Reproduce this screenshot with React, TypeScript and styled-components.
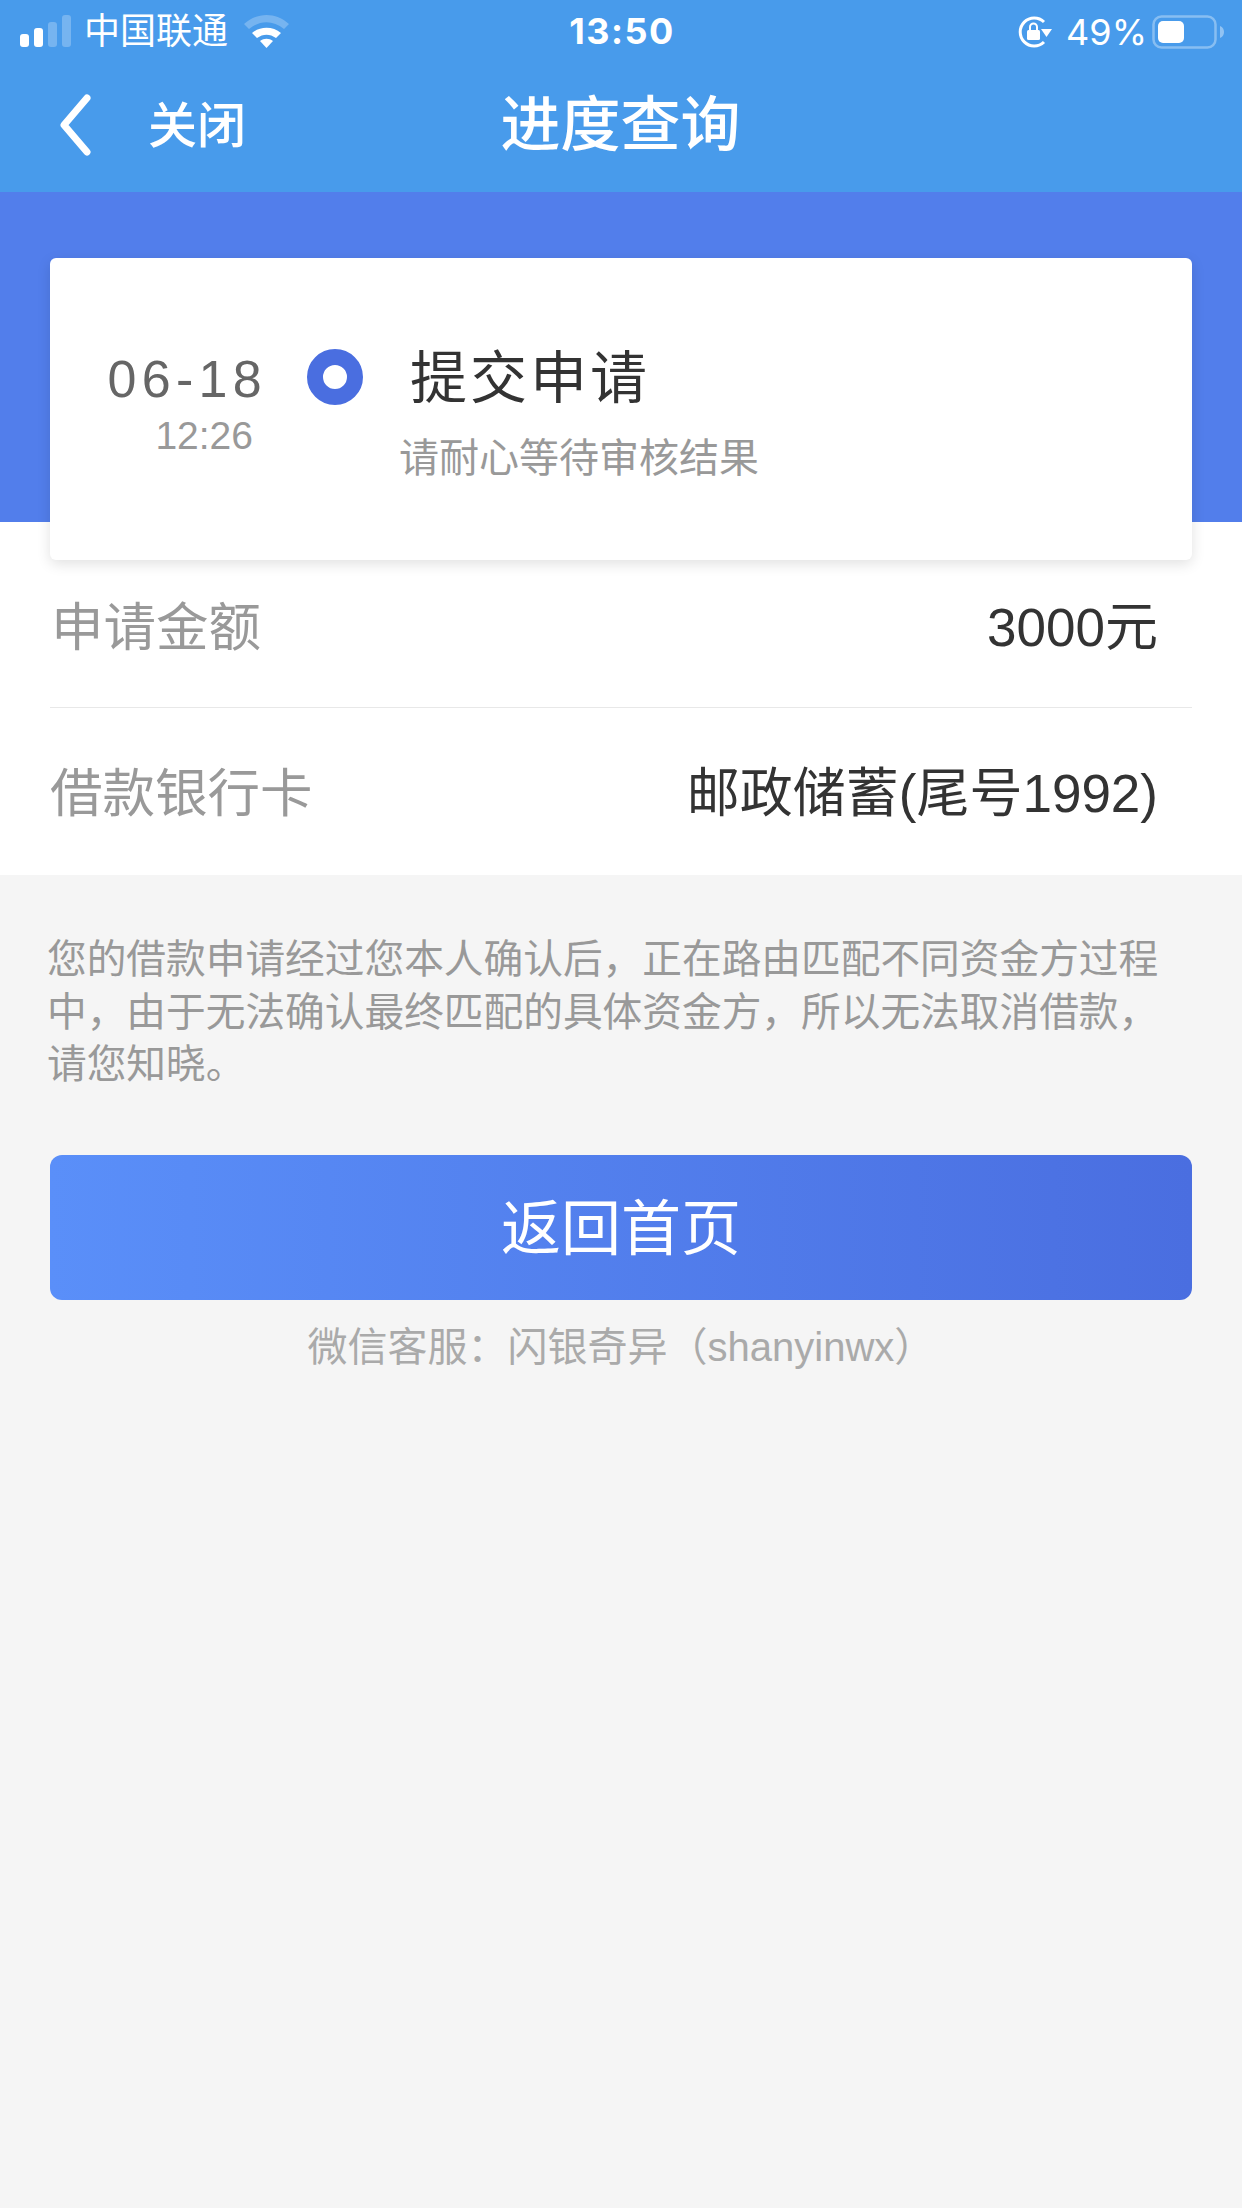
import React from 'react';
import styled, {createGlobalStyle} from 'styled-components';

const GlobalStyle = createGlobalStyle`
  html, body {
    margin: 0;
    padding: 0;
    background: #f5f5f5;
    font-family: "Liberation Sans", "Noto Sans CJK SC", sans-serif;
  }
`;

const Page = styled.div`
  width: 1242px;
  height: 2208px;
  overflow: hidden;
  background: #f5f5f5;
`;

const Header = styled.header`
  height: 192px;
  background: #489beb;
  color: #ffffff;
`;

const StatusBar = styled.div`
  height: 64px;
  padding: 0 16px 0 20px;
  display: grid;
  grid-template-columns: 1fr auto 1fr;
  align-items: center;
`;

const StatusLeft = styled.div`
  display: flex;
  align-items: center;
`;

const StatusRight = styled.div`
  display: flex;
  align-items: center;
  justify-content: flex-end;
`;

const Carrier = styled.span`
  margin: 0 16px 0 12px;
  font-size: 36px;
  line-height: 64px;
`;

const Clock = styled.span`
  margin: -2px 2px 0 0;
  font-family: Inter, "Liberation Sans", sans-serif;
  font-size: 36px;
  font-weight: 700;
  letter-spacing: 1.5px;
`;

const Battery = styled.span`
  font-family: Inter, "Liberation Sans", sans-serif;
  font-size: 36px;
  margin: 0 5px 0 14px;
`;

const NavBar = styled.div`
  height: 128px;
  padding: 0 0 14px 59px;
  box-sizing: border-box;
  display: grid;
  grid-template-columns: 1fr auto 1fr;
  align-items: center;
`;

const BackLink = styled.div`
  display: flex;
  align-items: center;
  gap: 57px;
`;

const BackChevron = styled.svg`
  margin-top: 8px;
`;

const BackText = styled.span`
  font-size: 49px;
  font-weight: 500;
`;

const NavTitle = styled.h1`
  margin: 0 0 4px;
  font-size: 60px;
  font-weight: 500;
  position: relative;
  left: -30px;
`;

const Band = styled.div`
  height: 330px;
  padding: 66px 50px 0;
  box-sizing: border-box;
  background: #527eeb;
`;

const Card = styled.section`
  position: relative;
  height: 302px;
  box-sizing: border-box;
  background: #ffffff;
  border-radius: 6px;
  box-shadow: 0 4px 14px rgba(0, 0, 0, 0.12);
  display: flex;
  padding: 88px 0 0 58px;
`;

const DateCol = styled.div`
  width: 158px;
  padding-top: 3px;
  display: flex;
  flex-direction: column;
  align-items: flex-end;
`;

const DateText = styled.div`
  margin-right: -1px;
  font-size: 52px;
  line-height: 60px;
  letter-spacing: 5.3px;
  color: #666666;
  white-space: nowrap;
`;

const TimeText = styled.div`
  margin: 4px 13px 0 0;
  font-size: 39px;
  line-height: 46px;
  color: #999999;
  white-space: nowrap;
`;

const Dot = styled.div`
  width: 56px;
  height: 56px;
  margin: 3px 0 0 41px;
  box-sizing: border-box;
  border: 16px solid #4a6ee0;
  border-radius: 50%;
  flex: none;
`;

const StepCol = styled.div`
  margin-left: 47px;
`;

const StepTitle = styled.div`
  font-size: 57px;
  line-height: 66px;
  letter-spacing: 3px;
  margin-top: -1px;
  color: #333333;
`;

const StepHint = styled.div`
  margin: 19px 0 0 -11px;
  font-size: 40px;
  line-height: 56px;
  color: #999999;
`;

const Details = styled.section`
  background: #ffffff;
  height: 353px;
  padding: 38px 50px 0;
  box-sizing: border-box;
`;

const Row = styled.div<{$height: number; $lift: number; $divider?: boolean}>`
  height: ${p => p.$height}px;
  display: flex;
  align-items: center;
  justify-content: space-between;
  padding: 0 34px ${p => p.$lift * 2}px 0;
  border-bottom: ${p => (p.$divider ? '1px solid #e8e8e8' : 'none')};
  box-sizing: border-box;
`;

const Label = styled.span<{$indent?: number}>`
  margin-left: ${p => p.$indent || 0}px;
  font-size: 52.5px;
  color: #999999;
`;

const Value = styled.span`
  font-size: 53px;
  color: #333333;
`;

const Notice = styled.p`
  margin: 0;
  padding: 58px 50px 0 47px;
  font-size: 39.7px;
  line-height: 52.5px;
  color: #999999;
`;

const HomeButton = styled.button`
  display: block;
  width: 1142px;
  height: 145px;
  margin: 64px 50px 0;
  padding: 0 0 8px;
  border: none;
  border-radius: 12px;
  background: linear-gradient(90deg, #5a8ff9 0%, #4a6ee0 100%);
  color: #ffffff;
  font-family: inherit;
  font-size: 60px;
`;

const Service = styled.div`
  margin-top: 22px;
  text-align: center;
  font-size: 40px;
  line-height: 50px;
  color: #aaaaaa;
`;

const SignalIcon = () => (
    <svg width="52" height="34" viewBox="0 0 52 34" fill="#ffffff">
        <rect x="0" y="19" width="9" height="13" rx="3"/>
        <rect x="14" y="13" width="9" height="19" rx="3"/>
        <rect x="28" y="7" width="9" height="25" rx="3" opacity=".25"/>
        <rect x="42" y="0" width="9" height="32" rx="3" opacity=".25"/>
    </svg>
);

const WifiIcon = () => (
    <svg width="45" height="34" viewBox="0 0 45 34" fill="#ffffff">
        <path d="M0 9 C13 -3 32 -3 45 9 L40 14 C29 5 16 5 5 14 Z" opacity=".25"/>
        <path d="M8 18 C16 11 29 11 37 18 L32 23 C26 18.5 19 18.5 13 23 Z"/>
        <path d="M16 26 C20 23 25 23 29 26 L22.5 33 Z"/>
    </svg>
);

const LockIcon = () => (
    <svg width="35" height="32" viewBox="0 0 35 32">
        <path d="M27 6 A14 14 0 1 0 27 26" fill="none" stroke="#ffffff" strokeWidth="3"/>
        <path d="M24 13 L35 13 L29.5 21 Z" fill="#ffffff"/>
        <rect x="10" y="14" width="13" height="10" rx="1.5" fill="#ffffff"/>
        <path d="M13 14 V11 A3.5 3.5 0 0 1 20 11 V14" fill="none" stroke="#ffffff" strokeWidth="2"/>
    </svg>
);

const BatteryIcon = () => (
    <svg width="74" height="34" viewBox="0 0 74 34" fill="#ffffff">
        <rect x="1.5" y="1.5" width="62" height="31" rx="8" fill="none" stroke="#ffffff" strokeWidth="2.5" opacity=".35"/>
        <rect x="6" y="6" width="26" height="22" rx="5"/>
        <path d="M68 11 C71 12 72 14.5 72 17 C72 19.5 71 22 68 23 Z" opacity=".4"/>
    </svg>
);

const BackIcon = () => (
    <BackChevron width="32" height="62" viewBox="0 0 32 62">
        <path d="M28 4 L5 31 L28 58" fill="none" stroke="#ffffff" strokeWidth="7" strokeLinecap="round" strokeLinejoin="round"/>
    </BackChevron>
);

const App = () => (
    <Page>
        <GlobalStyle/>
        <Header>
            <StatusBar>
                <StatusLeft>
                    <SignalIcon/>
                    <Carrier>中国联通</Carrier>
                    <WifiIcon/>
                </StatusLeft>
                <Clock>13:50</Clock>
                <StatusRight>
                    <LockIcon/>
                    <Battery>49%</Battery>
                    <BatteryIcon/>
                </StatusRight>
            </StatusBar>
            <NavBar>
                <BackLink>
                    <BackIcon/>
                    <BackText>关闭</BackText>
                </BackLink>
                <NavTitle>进度查询</NavTitle>
            </NavBar>
        </Header>
        <Band>
            <Card>
                <DateCol>
                    <DateText>06-18</DateText>
                    <TimeText>12:26</TimeText>
                </DateCol>
                <Dot/>
                <StepCol>
                    <StepTitle>提交申请</StepTitle>
                    <StepHint>请耐心等待审核结果</StepHint>
                </StepCol>
            </Card>
        </Band>
        <Details>
            <Row $height={148} $lift={11} $divider>
                <Label $indent={1}>申请金额</Label>
                <Value>3000元</Value>
            </Row>
            <Row $height={167} $lift={3}>
                <Label>借款银行卡</Label>
                <Value>邮政储蓄(尾号1992)</Value>
            </Row>
        </Details>
        <Notice>
            您的借款申请经过您本人确认后，正在路由匹配不同资金方过程中，由于无法确认最终匹配的具体资金方，所以无法取消借款，请您知晓。
        </Notice>
        <HomeButton>返回首页</HomeButton>
        <Service>微信客服：闪银奇异（shanyinwx）</Service>
    </Page>
);

export default App;
